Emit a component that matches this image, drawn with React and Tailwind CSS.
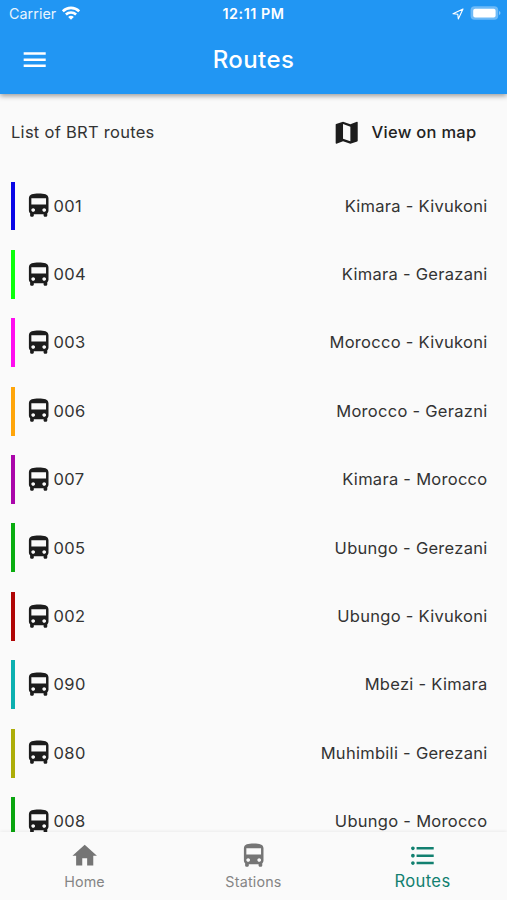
const routes = [
  { code: '001', name: 'Kimara - Kivukoni', bar: 'bg-[#0a06e6]' },
  { code: '004', name: 'Kimara - Gerazani', bar: 'bg-[#0bff0b]' },
  { code: '003', name: 'Morocco - Kivukoni', bar: 'bg-[#ff0cf0]' },
  { code: '006', name: 'Morocco - Gerazni', bar: 'bg-[#ffa50a]' },
  { code: '007', name: 'Kimara - Morocco', bar: 'bg-[#aa06aa]' },
  { code: '005', name: 'Ubungo - Gerezani', bar: 'bg-[#0aad10]' },
  { code: '002', name: 'Ubungo - Kivukoni', bar: 'bg-[#b00505]' },
  { code: '090', name: 'Mbezi - Kimara', bar: 'bg-[#0cb0b0]' },
  { code: '080', name: 'Muhimbili - Gerezani', bar: 'bg-[#adad08]' },
  { code: '008', name: 'Ubungo - Morocco', bar: 'bg-[#0aa50f]' },
];

const paths = {
  menu: 'M3 18h18v-2H3v2zm0-5h18v-2H3v2zm0-7v2h18V6H3z',
  bus: 'M4 16c0 .88.39 1.67 1 2.22V20c0 .55.45 1 1 1h1c.55 0 1-.45 1-1v-1h8v1c0 .55.45 1 1 1h1c.55 0 1-.45 1-1v-1.78c.61-.55 1-1.34 1-2.22V6c0-3.5-3.58-4-8-4s-8 .5-8 4v10zm3.5 1c-.83 0-1.5-.67-1.5-1.5S6.67 14 7.5 14s1.5.67 1.5 1.5S8.33 17 7.5 17zm9 0c-.83 0-1.5-.67-1.5-1.5s.67-1.5 1.5-1.5 1.5.67 1.5 1.5-.67 1.5-1.5 1.5zm1.5-6H6V6h12v5z',
  map: 'M20.5 3l-.16.03L15 5.1 9 3 3.36 4.9c-.21.07-.36.25-.36.48V20.5c0 .28.22.5.5.5l.16-.03L9 18.9l6 2.1 5.64-1.9c.21-.07.36-.25.36-.48V3.5c0-.28-.22-.5-.5-.5zM15 19l-6-2.11V5l6 2.11V19z',
  home: 'M10 20v-6h4v6h5v-8h3L12 3 2 12h3v8z',
  list: 'M4 10.5c-.83 0-1.5.67-1.5 1.5s.67 1.5 1.5 1.5 1.5-.67 1.5-1.5-.67-1.5-1.5-1.5zm0-6c-.83 0-1.5.67-1.5 1.5S3.17 7.5 4 7.5 5.5 6.83 5.5 6 4.83 4.5 4 4.5zm0 12c-.83 0-1.5.68-1.5 1.5s.68 1.5 1.5 1.5 1.5-.68 1.5-1.5-.67-1.5-1.5-1.5zM7 19h14v-2H7v2zm0-6h14v-2H7v2zm0-8v2h14V5H7z',
};

function Icon({ name, className = '' }) {
  return (
    <svg viewBox="0 0 24 24" className={`size-[29.4px] shrink-0 fill-current ${className}`}>
      <path d={paths[name]} />
    </svg>
  );
}

function StatusBar() {
  return (
    <div className="grid h-[24.5px] grid-cols-3 items-center pt-[3px] text-[14.3px] leading-none">
      <div className="flex items-center gap-[6px] pl-[9px]">
        <span className="tracking-[0.05px] opacity-90">Carrier</span>
        <svg viewBox="0 0 18 14" className="-mt-[2px] h-[14px] w-[18px]" fill="none" stroke="currentColor" strokeWidth="2.6">
          <path d="M.8 5.2C5.4.7 12.6.7 17.2 5.2" />
          <path d="M3.900 8.500c2.900-2.700 7.300-2.700 10.200 0" />
          <path d="M9 13.700 6.200 10.900c1.500-1.400 4.100-1.400 5.600 0z" fill="currentColor" stroke="none" />
        </svg>
      </div>
      <div className="text-center font-semibold tracking-[0.55px]">12:11 PM</div>
      <div className="flex items-center justify-end gap-[6px] pr-[6px]">
        <svg viewBox="0 0 12 12" className="size-[12px]" fill="none" stroke="currentColor" strokeWidth="1.1" strokeLinejoin="round">
          <path d="M11 1 1 5.7l4.8.5.5 4.8z" />
        </svg>
        <svg viewBox="0 0 31 14" className="-mt-[1px] h-[14px] w-[31px]">
          <rect x=".6" y=".3" width="27.6" height="13.4" rx="4" fill="white" fillOpacity=".35" />
          <rect x="3.2" y="2.8" width="22.4" height="8.6" rx="2" fill="white" />
          <path d="M29 5v4c2-.7 2-3.3 0-4z" fill="white" fillOpacity=".45" />
        </svg>
      </div>
    </div>
  );
}

function RouteRow({ route }) {
  return (
    <li className="flex h-[48.9px] shrink-0 items-center">
      <span className={`h-full w-[4px] ${route.bar}`} />
      <Icon name="bus" className="ml-[9.2px] text-[#1c1c1c]" />
      <span className="ml-[0.5px] tracking-[0.35px]">{route.code}</span>
      <span className="ml-auto">{route.name}</span>
    </li>
  );
}

export default function App() {
  return (
    <div className="flex h-[900px] w-[507px] flex-col overflow-hidden bg-[#fafafa] font-['Inter',sans-serif] text-[#333]">
      <header className="z-10 h-[93.5px] shrink-0 bg-[#2196f3] text-white shadow-[0_2px_5px_rgba(0,0,0,0.38)]">
        <StatusBar />
        <div className="grid h-[69px] grid-cols-3 items-center pt-[2px]">
          <Icon name="menu" className="ml-[20px]" />
          <h1 className="text-center text-[24px] font-medium tracking-[0.4px]">Routes</h1>
        </div>
      </header>
      <main className="flex min-h-0 flex-1 flex-col overflow-hidden pl-[10.5px] pr-[19.5px] text-[16.5px] tracking-[0.28px]">
        <div className="mt-[14.5px] flex h-[49px] shrink-0 items-center pr-[11px]">
          <span className="ml-[0.5px]">List of BRT routes</span>
          <Icon name="map" className="ml-auto text-[#1c1c1c]" />
          <span className="ml-[10px] font-medium text-[#222]">View on map</span>
        </div>
        <ul className="mt-[24.5px] flex flex-col gap-[19.5px]">
          {routes.map((route) => (
            <RouteRow key={route.code} route={route} />
          ))}
        </ul>
      </main>
      <nav className="z-10 grid h-[68.5px] shrink-0 grid-cols-3 bg-[#fafafa] text-[#757575] shadow-[0_-1px_3px_rgba(0,0,0,0.06)]">
        <div className="flex flex-col items-center pt-[9.5px]">
          <Icon name="home" />
          <span className="mt-[2.5px] text-[14.3px] leading-[18px] tracking-[0.1px] text-[#858585]">Home</span>
        </div>
        <div className="flex flex-col items-center pt-[9.5px]">
          <Icon name="bus" />
          <span className="mt-[2.5px] text-[14.3px] leading-[18px] tracking-[0.2px] text-[#858585]">Stations</span>
        </div>
        <div className="flex flex-col items-center pt-[9.5px] text-[#128070]">
          <Icon name="list" />
          <span className="mt-[0.5px] text-[16.6px] leading-[20px] tracking-[0.35px]">Routes</span>
        </div>
      </nav>
    </div>
  );
}
